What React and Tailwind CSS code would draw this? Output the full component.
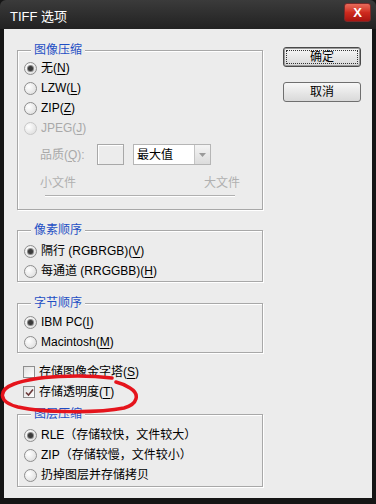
import React from "react";

const Radio = ({ checked, disabled }) => (
  <span
    className={
      "flex h-[13px] w-[13px] shrink-0 items-center justify-center rounded-full border bg-[radial-gradient(circle_at_35%_35%,#ffffff,#d8d8d8)] " +
      (disabled ? "border-[#c8c8c8]" : "border-[#8e8e8e]")
    }
  >
    {checked && <span className="h-[5px] w-[5px] rounded-full bg-[#3a3a3a] shadow-[0_0_0_1px_#8a8a8a]" />}
  </span>
);

const Check = ({ checked }) => (
  <span className="flex h-[12px] w-[12px] shrink-0 items-center justify-center border border-[#8e8e8e] bg-[linear-gradient(135deg,#e0e0e0,#ffffff)]">
    {checked && (
      <svg width="9" height="9" viewBox="0 0 9 9">
        <path d="M1 4.5 L3.5 7 L8 1.5" fill="none" stroke="#6b3a3a" strokeWidth="1.6" />
      </svg>
    )}
  </span>
);

const Row = ({ children, disabled }) => (
  <div className={"flex h-[20px] items-center gap-[4px] " + (disabled ? "text-[#a9a9a9]" : "text-black")}>
    {children}
  </div>
);

const Group = ({ label, className, children }) => (
  <div className={"relative border border-[#a8a8a8] shadow-[inset_1px_1px_0_#ffffff,1px_1px_0_#ffffff] " + className}>
    <span className="absolute left-[13px] top-[-9px] bg-[#ececec] px-[3px] leading-[16px] text-[#1f4fc4]">{label}</span>
    {children}
  </div>
);

const U = ({ children }) => <span className="underline underline-offset-2">{children}</span>;

const Button = ({ children, focused, className }) => (
  <div
    className={
      "flex h-[20px] w-[78px] items-center justify-center rounded-[3px] border bg-gradient-to-b from-[#f7f7f7] to-[#d9d9d9] p-[2px] " +
      (focused ? "border-[#4a4a4a] shadow-[inset_0_0_0_1px_#9a9a9a] " : "border-[#6f6f6f] ") +
      className
    }
  >
    <div className={"flex h-full w-full items-center justify-center " + (focused ? "border border-dotted border-[#333]" : "")}>
      {children}
    </div>
  </div>
);

export default function App() {
  return (
    <div className="relative flex h-[504px] w-[376px] flex-col overflow-hidden bg-[#151515] font-['Liberation_Sans','Noto_Sans_CJK_SC',sans-serif] text-[12px] leading-[14px]">
      {/* title bar */}
      <div className="flex h-[29px] shrink-0 items-start justify-between rounded-t-[6px] bg-gradient-to-b from-[#3b3b3b] to-[#222222]">
        <span className="pl-[10px] pt-[9px] text-[13px] leading-[16px] text-white">TIFF 选项</span>
        <div className="mr-[5px] mt-[3px] flex h-[19px] w-[27px] items-center justify-center rounded-[3px] border border-[#7a2a2a] bg-gradient-to-b from-[#e86a5a] via-[#cf2a1e] to-[#a81410] text-[13px] font-bold leading-none text-white">
          X
        </div>
      </div>

      {/* client */}
      <div className="mx-[4px] mb-[6px] flex flex-1 bg-[#ececec] pl-[13px]">
        <div className="flex w-[246px] flex-col">
          <Group label="图像压缩" className="mt-[21px] h-[160px] pl-[6px] pt-[7px]">
            <Row>
              <Radio checked />
              <span>
                无(<U>N</U>)
              </span>
            </Row>
            <Row>
              <Radio />
              <span>
                LZW(<U>L</U>)
              </span>
            </Row>
            <Row>
              <Radio />
              <span>
                ZIP(<U>Z</U>)
              </span>
            </Row>
            <Row disabled>
              <Radio disabled />
              <span>
                JPEG(<U>J</U>)
              </span>
            </Row>
            <div className="mt-[6px] flex h-[21px] items-center pl-[16px]">
              <span className="w-[57px] text-[#a9a9a9]">
                品质(<U>Q</U>):
              </span>
              <div className="h-[21px] w-[27px] border border-[#a8a8a8] shadow-[inset_1px_1px_0_#ffffff]" />
              <div className="ml-[9px] flex h-[21px] w-[78px] items-stretch border border-[#b5b5b5] bg-white">
                <span className="flex flex-1 items-center pl-[3px] text-black">最大值</span>
                <div className="flex w-[16px] items-center justify-center border-l border-[#c4c4c4] bg-gradient-to-b from-[#f4f4f4] to-[#dcdcdc]">
                  <svg width="7" height="4" viewBox="0 0 7 4">
                    <path d="M0 0 H7 L3.5 4 Z" fill="#9a9a9a" />
                  </svg>
                </div>
              </div>
            </div>
            <div className="mt-[10px] flex h-[16px] items-center justify-between pl-[16px] pr-[22px] text-[#b0b0b0]">
              <span>小文件</span>
              <span>大文件</span>
            </div>
            <div className="ml-[21px] mt-[4px] h-[2px] w-[190px] border-t border-[#b0b0b0] border-b border-b-white" />
          </Group>

          <Group label="像素顺序" className="mt-[20px] h-[52px] pl-[6px] pt-[10px]">
            <Row>
              <Radio checked />
              <span>
                隔行 (RGBRGB)(<U>V</U>)
              </span>
            </Row>
            <Row>
              <Radio />
              <span>
                每通道 (RRGGBB)(<U>H</U>)
              </span>
            </Row>
          </Group>

          <Group label="字节顺序" className="mt-[21px] h-[50px] pl-[6px] pt-[8px]">
            <Row>
              <Radio checked />
              <span>
                IBM PC(<U>I</U>)
              </span>
            </Row>
            <Row>
              <Radio />
              <span>
                Macintosh(<U>M</U>)
              </span>
            </Row>
          </Group>

          <div className="mt-[9px] flex flex-col pl-[6px]">
            <Row>
              <Check />
              <span>
                存储图像金字塔(<U>S</U>)
              </span>
            </Row>
            <Row>
              <Check checked />
              <span>
                存储透明度(<U>T</U>)
              </span>
            </Row>
          </div>

          <Group label="图层压缩" className="mt-[12px] h-[73px] pl-[6px] pt-[10px]">
            <Row>
              <Radio checked />
              <span>RLE（存储较快，文件较大）</span>
            </Row>
            <Row>
              <Radio />
              <span>ZIP（存储较慢，文件较小）</span>
            </Row>
            <Row>
              <Radio />
              <span>扔掉图层并存储拷贝</span>
            </Row>
          </Group>
        </div>

        <div className="ml-[20px] flex flex-col pt-[18px]">
          <Button focused>确定</Button>
          <Button className="mt-[15px]">取消</Button>
        </div>
      </div>

      {/* hand-drawn red annotation */}
      <svg className="pointer-events-none absolute left-0 top-0" width="376" height="504" viewBox="0 0 376 504">
        <path
          d="M112 378 C 80 374, 35 376, 14 384 C -2 390, -2 402, 18 407 C 45 413, 100 413, 124 408 C 138 404, 140 394, 130 388 C 124 384, 120 383, 116 382"
          fill="none"
          stroke="#e5141c"
          strokeWidth="3.5"
          strokeLinecap="round"
        />
      </svg>
    </div>
  );
}
